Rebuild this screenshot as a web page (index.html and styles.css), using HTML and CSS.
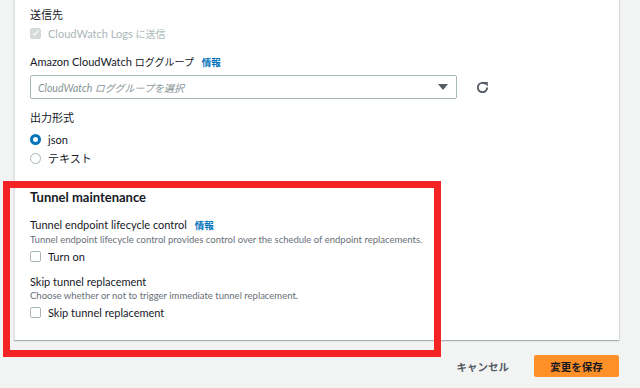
FILE: index.html
```html
<!DOCTYPE html>
<html lang="ja">
<head>
<meta charset="utf-8">
<link rel="stylesheet" href="styles.css">
</head>
<body>
<div class="page">
  <div class="card">
    <div class="label">送信先</div>
    <div class="check-row disabled">
      <span class="cb cb-checked-disabled"><svg viewBox="0 0 12 12" width="12" height="12"><path d="M2.5 6.2 L5 8.5 L9.5 3.5" fill="none" stroke="#fff" stroke-width="1.6"/></svg></span>
      <span>CloudWatch Logs <span class="ja">に送信</span></span>
    </div>
    <div class="label mt13">Amazon CloudWatch <span class="ja">ロググループ</span> <a class="info">情報</a></div>
    <div class="select-row">
      <div class="select">
        <span class="placeholder">CloudWatch <span class="ja">ロググループを選択</span></span>
        <svg class="caret" viewBox="0 0 10 6" width="10" height="6"><path d="M0 0 H10 L5 6 Z" fill="#545b64"/></svg>
      </div>
      <svg class="refresh" viewBox="0 0 16 16" width="15" height="15"><path d="M13 8 A5 5 0 1 1 11.5 4.4" fill="none" stroke="#545b64" stroke-width="2"/><path d="M9 2.2 L13.6 2.2 L13.6 6.8 Z" fill="#545b64"/></svg>
    </div>
    <div class="label mt11">出力形式</div>
    <div class="radio-row mt5"><span class="radio on"></span><span>json</span></div>
    <div class="radio-row mt3"><span class="radio"></span><span>テキスト</span></div>

    <h2 class="heading">Tunnel maintenance</h2>
    <div class="label mt11">Tunnel endpoint lifecycle control <a class="info">情報</a></div>
    <div class="desc mt1">Tunnel endpoint lifecycle control provides control over the schedule of endpoint replacements.</div>
    <div class="check-row mt2"><span class="cb"></span><span>Turn on</span></div>
    <div class="label mt10">Skip tunnel replacement</div>
    <div class="desc">Choose whether or not to trigger immediate tunnel replacement.</div>
    <div class="check-row mt3"><span class="cb"></span><span>Skip tunnel replacement</span></div>
  </div>
  <div class="footer">
    <button class="btn-link">キャンセル</button>
    <button class="btn-primary">変更を保存</button>
  </div>
  <div class="highlight"></div>
</div>
</body>
</html>
```
FILE: styles.css
```css
* { box-sizing: border-box; }
html, body { margin: 0; padding: 0; }
body {
  background: #f2f3f3;
  font-family: Lato, "Noto Sans CJK JP", sans-serif;
  color: #16191f;
  font-size: 11px;
  width: 640px;
  height: 388px;
  overflow: hidden;
}
.page { position: relative; width: 640px; height: 388px; }
.card {
  margin-left: 14px;
  width: 605px;
  background: #fff;
  border-left: 1px solid #dfe3e3;
  box-shadow: 0 1px 1px rgba(0, 28, 36, 0.3), 1px 0 0 rgba(0,28,36,0.08);
  padding: 7px 0 20px 15px;
}
.ja { font-size: 10px; }
.label { height: 16px; line-height: 16px; font-size: 11px; white-space: nowrap; }
.info { color: #0073bb; font-weight: 700; font-size: 9.5px; margin-left: 5px; }
.mt1 { margin-top: 1px; }
.mt2 { margin-top: 2px; }
.mt3 { margin-top: 3px; }
.mt5 { margin-top: 5px; }
.mt10 { margin-top: 10px; }
.mt11 { margin-top: 11px; }
.mt13 { margin-top: 13px; }
.check-row, .radio-row {
  display: flex; align-items: center; gap: 7px;
  height: 16px; font-size: 11px;
}
.check-row { margin-top: 2px; }
.check-row.disabled { color: #aab7b8; }
.cb {
  width: 11px; height: 11px; border: 1px solid #aab7b8; border-radius: 2px;
  background: #fff; display: inline-flex; align-items: center; justify-content: center;
  flex: none;
}
.cb-checked-disabled { background: #d5dbdb; border-color: #d5dbdb; }
.cb-checked-disabled svg { width: 10px; height: 10px; }
.radio {
  width: 11px; height: 11px; border-radius: 50%; border: 1px solid #aab7b8; flex: none; background: #fff;
}
.radio.on { border: 3.5px solid #0073bb; }
.select-row { display: flex; align-items: center; margin-top: 5px; }
.select {
  width: 427px; height: 24px; border: 1px solid #aab7b8; border-radius: 2px;
  display: flex; align-items: center; justify-content: space-between;
  padding: 0 8px 0 7px;
}
.placeholder { font-style: italic; color: #879596; font-size: 10.5px; }
.placeholder .ja { font-size: 10px; }
.caret { display: block; }
.refresh { margin-left: 18px; display: block; }
.heading {
  margin: 22px 0 0; font-size: 13px; font-weight: 700; height: 18px; line-height: 18px;
}
.desc { font-size: 9.5px; color: #687078; height: 12px; line-height: 12px; white-space: nowrap; }
.footer {
  display: flex; justify-content: flex-end; align-items: center; gap: 25px;
  margin-top: 15px; padding-right: 21px;
}
button { font-family: inherit; border: none; background: none; padding: 0; cursor: pointer; }
.btn-link { color: #545b64; font-weight: 700; font-size: 10.5px; height: 22px; }
.btn-primary {
  background: #ff9028; color: #16191f; font-weight: 700; font-size: 10.5px;
  width: 85px; height: 22px; border-radius: 2px;
}
.highlight {
  position: absolute; left: 3px; top: 181px; width: 438px; height: 176px;
  border: 7px solid #f52424; pointer-events: none;
}
```
